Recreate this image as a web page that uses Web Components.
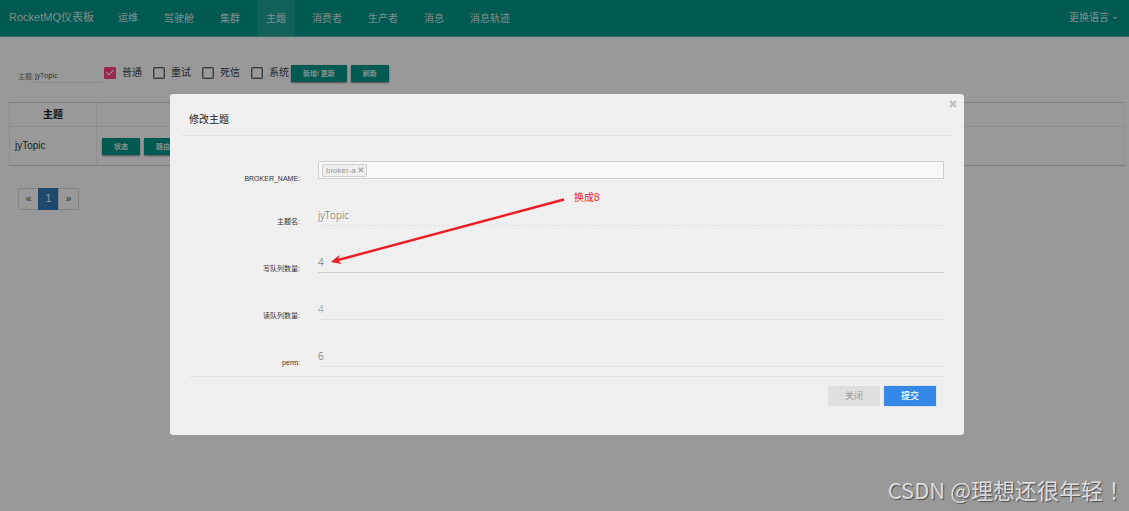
<!DOCTYPE html>
<html lang="zh-CN">
<head>
<meta charset="utf-8">
<title>RocketMQ仪表板</title>
<style>
  html, body { margin: 0; height: 100%; }
  body {
    background: #fff;
    color: #333;
    font: 10px/14px "Liberation Sans", "Noto Sans CJK SC", sans-serif;
    overflow: hidden;
  }
</style>
</head>
<body>
<rmq-app></rmq-app>

<script>
const define = (name, markup, setup) => {
  const template = document.createElement('template');
  template.innerHTML = markup;
  customElements.define(name, class extends HTMLElement {
    constructor() {
      super();
      this.attachShadow({ mode: 'open' }).append(template.content.cloneNode(true));
    }
    connectedCallback() {
      if (setup) setup(this, this.shadowRoot);
    }
  });
};

/* one entry of the top menu */
define('nav-item', `
<style>
  :host { display: flex; }
  a {
    display: flex; align-items: center; padding: 0 9px;
    color: rgba(255,255,255,.84); text-decoration: none; white-space: nowrap;
  }
  :host(:not([raised])) a { padding-top: 2px; }
  :host([active]) a { background: rgba(255,255,255,.13); }
  :host([caret]) a::after {
    content: ""; margin-left: 4px;
    border: 2px solid transparent; border-top-color: currentColor; border-bottom: 0;
  }
</style>
<a href="#"><slot></slot></a>`);

define('rmq-navbar', `
<style>
  :host {
    display: flex; height: 36px; background: #009688;
    border-bottom: 1px solid #4db6ac;
  }
  .brand {
    display: flex; align-items: center; padding: 0 15px 2px 9px;
    color: rgba(255,255,255,.84); font-size: 11px; text-decoration: none; white-space: nowrap;
  }
  nav { display: flex; gap: 8px; flex: 1; }
  .lang { padding-right: 3px; }
</style>
<a class="brand" href="#">RocketMQ仪表板</a>
<nav>
  <nav-item raised>运维</nav-item>
  <nav-item>驾驶舱</nav-item>
  <nav-item>集群</nav-item>
  <nav-item active>主题</nav-item>
  <nav-item>消费者</nav-item>
  <nav-item>生产者</nav-item>
  <nav-item>消息</nav-item>
  <nav-item>消息轨迹</nav-item>
</nav>
<nav-item class="lang" raised caret>更换语言</nav-item>`);

define('md-checkbox', `
<style>
  :host { display: block; }
  label { display: flex; align-items: center; gap: 6px; color: #444; white-space: nowrap; }
  input {
    appearance: none; position: relative; box-sizing: border-box; flex: none;
    width: 12px; height: 12px; margin: 0; border: 1px solid #666; border-radius: 1px;
    box-shadow: inset 0 0 0 1px #bbb;
  }
  input:checked { background: #ff4081; border-color: #ff4081; box-shadow: none; }
  input:checked::after {
    content: ""; position: absolute; left: 3px; top: 0;
    width: 3px; height: 6px; border: solid #fff; border-width: 0 1px 1px 0;
    transform: rotate(45deg);
  }
</style>
<label><input type="checkbox"><span><slot></slot></span></label>`,
(host, root) => { root.querySelector('input').checked = host.hasAttribute('checked'); });

define('raised-button', `
<style>
  :host { display: block; }
  button {
    display: block; height: 17px; padding: 0 12px; border: 0; border-radius: 1px;
    background: #009688; color: rgba(255,255,255,.87);
    font: bold 7px/17px "Liberation Sans", "Noto Sans CJK SC", sans-serif; white-space: nowrap;
    box-shadow: 0 1px 2px rgba(0,0,0,.5);
  }
</style>
<button type="button"><slot></slot></button>`);

define('topic-filter', `
<style>
  :host { display: flex; align-items: center; padding: 25px 0 0 18px; }
  .search { display: flex; align-items: flex-end; gap: 1px; margin-right: 3px; padding-top: 8px; }
  label { color: #777; font-size: 7px; line-height: 12px; }
  .search input {
    box-sizing: border-box; width: 66px; height: 13px; padding: 0 0 1px; border: 0;
    border-bottom: 1px solid #e4e4e4; background: none; color: #444; outline: 0;
    font: 7px/10px "Open Sans", sans-serif;
  }
  .checks { display: flex; gap: 11px; margin-right: 2px; }
  .actions { display: flex; gap: 4px; padding-top: 1px; }
</style>
<div class="search"><label for="q">主题:</label><input id="q" type="text" value="jyTopic"></div>
<div class="checks">
  <md-checkbox checked>普通</md-checkbox>
  <md-checkbox>重试</md-checkbox>
  <md-checkbox>死信</md-checkbox>
  <md-checkbox>系统</md-checkbox>
</div>
<div class="actions">
  <raised-button>新增/ 更新</raised-button>
  <raised-button>刷新</raised-button>
</div>`);

define('topic-table', `
<style>
  :host { display: block; margin: 19px 4px 0 9px; }
  table { width: 100%; border-collapse: collapse; border: 1px solid #d0d0d0; }
  th, td { border: 1px solid #ececec; padding: 0 5px; text-align: left; }
  th { height: 23px; text-align: center; color: #222; }
  td { height: 38px; }
  tr > :first-child { width: 76px; }
  thead th { border-top-color: #d0d0d0; }
  tbody td { border-bottom-color: #d0d0d0; }
  .ops { display: flex; gap: 4px; }
</style>
<table>
  <thead><tr><th>主题</th><th></th></tr></thead>
  <tbody><tr>
    <td>jyTopic</td>
    <td><div class="ops"><raised-button>状态</raised-button><raised-button>路由</raised-button></div></td>
  </tr></tbody>
</table>`);

define('page-links', `
<style>
  :host { display: flex; margin: 22px 0 0 18px; }
  a {
    width: 19px; height: 20px; border: 1px solid #ddd; margin-right: -1px;
    line-height: 20px; text-align: center; color: #444; text-decoration: none;
  }
  style + a { border-radius: 3px 0 0 3px; }
  a:last-child { border-radius: 0 3px 3px 0; }
  a[aria-current] { background: #337ab7; border-color: #337ab7; color: #fff; }
</style>
<a href="#">«</a><a href="#" aria-current="page">1</a><a href="#">»</a>`);

/* label with an underlined input, or with a tag box when "tags" is set */
define('form-field', `
<style>
  :host { display: grid; grid-template-columns: 111px 1fr; gap: 18px; height: 22px; align-items: end; }
  :host([tags]) { align-items: start; }
  label { text-align: right; font-size: 7px; line-height: 8px; white-space: nowrap; color: #333; }
  :host([tags]) label { align-self: end; }
  input {
    box-sizing: border-box; width: 100%; min-width: 0; height: 22px; padding: 0; border: 0; outline: 0;
    border-bottom: 1px solid var(--line, #e2e2e2); background: none; color: var(--ink, #555);
    font: 300 10px/20px "Open Sans", sans-serif;
  }
  :host([disabled]) input { border-bottom-style: dashed; }
  .tags {
    display: flex; align-items: center; box-sizing: border-box; height: 18px; padding: 0 3px;
    border: 1px solid #cfcfcf; background: #f8f8f8;
  }
  .tag {
    display: flex; align-items: center; gap: 2px; height: 11px; padding: 0 2px 0 3px;
    border: 1px solid #d0d0d0; border-radius: 1px; background: #efefef; color: #999;
    font: 8px/11px "Liberation Sans", sans-serif;
  }
  .tag button { display: flex; border: 0; padding: 0; background: none; color: #aaa; }
  .tags input { flex: 1; height: 14px; border: 0; }
</style>
<label></label>
<input class="line" type="text">
<div class="tags">
  <span class="tag"><span></span><button type="button" aria-label="移除"><svg width="6" height="6" viewBox="0 0 6 6"><path d="M.8.8l4.4 4.4M5.2.8L.8 5.2" stroke="currentColor" stroke-width="1.5"/></svg></button></span>
  <input type="text">
</div>`,
(host, root) => {
  const tagged = host.hasAttribute('tags');
  const label = root.querySelector('label');
  const input = root.querySelector(tagged ? '.tags input' : '.line');
  root.querySelector(tagged ? '.line' : '.tags').remove();
  input.id = 'field';
  label.htmlFor = 'field';
  label.textContent = host.getAttribute('label');
  if (tagged) root.querySelector('.tag span').textContent = host.getAttribute('value');
  else {
    input.value = host.getAttribute('value');
    input.disabled = host.hasAttribute('disabled');
  }
});

define('edit-dialog', `
<style>
  :host {
    display: block; position: relative; background: #efefef; border-radius: 3px;
    padding: 0 11px 29px;
  }
  h2 {
    margin: 0; padding: 19px 8px 8px; border-bottom: 1px solid #e2e2e2;
    font-size: 10px; line-height: 14px; font-weight: normal; color: #222;
  }
  .close {
    position: absolute; right: 7px; top: 6px; display: flex;
    border: 0; padding: 0; background: none; color: #b8b8b8;
  }
  form { padding: 25px 9px 0 8px; }
  .rows { display: flex; flex-direction: column; gap: 25px; padding-top: 21px; }
  footer {
    display: flex; justify-content: flex-end; gap: 4px;
    margin-top: 9px; padding: 9px 8px 0; border-top: 1px solid #e2e2e2;
  }
  footer button {
    width: 52px; height: 20px; padding: 0; border: 0; border-radius: 1px;
    background: #dfdfdf; color: #999; font: 9px/20px "Noto Sans CJK SC", sans-serif;
  }
  footer .primary { background: #3388e8; color: #fff; font-weight: 500; box-shadow: 0 0 1px #3388e8; }
  .pale { --ink: #888; }
  .strong { --line: #cbcbcb; }
</style>
<button class="close" type="button" aria-label="关闭"><svg width="8" height="8" viewBox="0 0 8 8"><path d="M1 1l6 6M7 1L1 7" stroke="currentColor" stroke-width="1.8"/></svg></button>
<h2>修改主题</h2>
<form>
  <form-field tags label="BROKER_NAME:" value="broker-a"></form-field>
  <div class="rows">
    <form-field disabled label="主题名:" value="jyTopic"></form-field>
    <form-field class="strong" label="写队列数量:" value="4"></form-field>
    <form-field class="pale" label="读队列数量:" value="4"></form-field>
    <form-field label="perm:" value="6"></form-field>
  </div>
  <footer><button type="button">关闭</button><button class="primary" type="button">提交</button></footer>
</form>
<slot></slot>`);

/* red remark with an arrow pointing at the write queue count */
define('arrow-note', `
<style>
  :host {
    position: absolute; left: 161px; top: 96px; display: flex; align-items: flex-start; gap: 9px;
    color: #ed1c24; line-height: 16px; pointer-events: none;
  }
  svg { display: block; }
</style>
<svg width="234" height="78" viewBox="0 0 234 78">
  <path d="M233 9.500L7 70" stroke="#ed1c24" stroke-width="2.400" fill="none"/>
  <path d="M0 72L8.500 65L7 70L10.500 74Z" fill="#ed1c24"/>
</svg>
<span><slot></slot></span>`);

define('water-mark', `
<style>
  :host {
    position: absolute; right: 4px; bottom: 6px; color: rgba(255,255,255,.75);
    font: 22px/32px "Noto Sans CJK TC", sans-serif; white-space: nowrap;
    text-shadow: 1px 1px 1px rgba(0,0,0,.5);
  }
</style>
<slot></slot>`);

define('rmq-app', `
<style>
  :host { display: block; position: relative; min-height: 100vh; }
  .overlay {
    position: absolute; inset: 0; background: rgba(0,0,0,.4);
    padding: 94px 165px 0 170px;
  }
</style>
<rmq-navbar></rmq-navbar>
<main>
  <topic-filter></topic-filter>
  <topic-table></topic-table>
  <page-links></page-links>
</main>
<div class="overlay">
  <edit-dialog><arrow-note>换成8</arrow-note></edit-dialog>
</div>
<water-mark lang="zh-TW">CSDN @理想还很年轻！</water-mark>`);
</script>
</body>
</html>
